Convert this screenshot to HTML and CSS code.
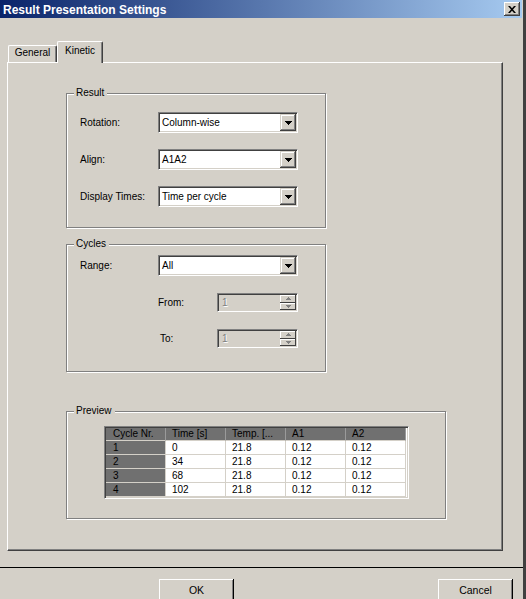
FILE: index.html
```html
<!DOCTYPE html>
<html>
<head>
<meta charset="utf-8">
<title>Result Presentation Settings</title>
<link rel="stylesheet" href="styles.css">
</head>
<body>
<div class="window">
  <div class="titlebar">
    <span class="title">Result Presentation Settings</span>
    <span class="close"><svg width="8" height="7" viewBox="0 0 8 7"><path d="M0 0h2l2 2.2L6 0h2L5 3.5 8 7H6L4 4.8 2 7H0l3-3.5z" fill="#000"/></svg></span>
  </div>
  <div class="tabs">
    <div class="tab">General</div>
    <div class="tab active">Kinetic</div>
  </div>
  <div class="panel">
    <fieldset class="group narrow">
      <legend>Result</legend>
      <div class="form result-form">
        <span class="lbl">Rotation:</span>
        <div class="combo"><span class="value">Column-wise</span><span class="drop"><svg width="7" height="4" viewBox="0 0 7 4"><path d="M0 0h7v1h-1v1h-1v1h-1v1h-1v-1h-1v-1h-1v-1h-1z" fill="#000"/></svg></span></div>
        <span class="lbl">Align:</span>
        <div class="combo"><span class="value">A1A2</span><span class="drop"><svg width="7" height="4" viewBox="0 0 7 4"><path d="M0 0h7v1h-1v1h-1v1h-1v1h-1v-1h-1v-1h-1v-1h-1z" fill="#000"/></svg></span></div>
        <span class="lbl">Display Times:</span>
        <div class="combo"><span class="value">Time per cycle</span><span class="drop"><svg width="7" height="4" viewBox="0 0 7 4"><path d="M0 0h7v1h-1v1h-1v1h-1v1h-1v-1h-1v-1h-1v-1h-1z" fill="#000"/></svg></span></div>
      </div>
    </fieldset>
    <fieldset class="group narrow cycles">
      <legend>Cycles</legend>
      <div class="form cycles-form">
        <span class="lbl">Range:</span>
        <div class="combo wide"><span class="value">All</span><span class="drop"><svg width="7" height="4" viewBox="0 0 7 4"><path d="M0 0h7v1h-1v1h-1v1h-1v1h-1v-1h-1v-1h-1v-1h-1z" fill="#000"/></svg></span></div>
        <span class="lbl sub">From:</span>
        <div class="spin"><span class="value">1</span><span class="arrows"><span class="sbtn"><svg width="5" height="3" viewBox="0 0 5 3"><path d="M2 0h1v1h1v1h1v1h-5v-1h1v-1h1z" fill="#808080"/></svg></span><span class="sbtn"><svg width="5" height="3" viewBox="0 0 5 3"><path d="M0 0h5v1h-1v1h-1v1h-1v-1h-1v-1h-1z" fill="#808080"/></svg></span></span></div>
        <span class="lbl sub to">To:</span>
        <div class="spin"><span class="value">1</span><span class="arrows"><span class="sbtn"><svg width="5" height="3" viewBox="0 0 5 3"><path d="M2 0h1v1h1v1h1v1h-5v-1h1v-1h1z" fill="#808080"/></svg></span><span class="sbtn"><svg width="5" height="3" viewBox="0 0 5 3"><path d="M0 0h5v1h-1v1h-1v1h-1v-1h-1v-1h-1z" fill="#808080"/></svg></span></span></div>
      </div>
    </fieldset>
    <fieldset class="group preview">
      <legend>Preview</legend>
      <div class="form preview-form">
        <div class="grid">
          <table>
            <thead>
              <tr><th class="first">Cycle Nr.</th><th>Time [s]</th><th>Temp. [...</th><th>A1</th><th>A2</th></tr>
            </thead>
            <tbody>
              <tr><td class="first idx">1</td><td>0</td><td>21.8</td><td>0.12</td><td>0.12</td></tr>
              <tr><td class="first idx">2</td><td>34</td><td>21.8</td><td>0.12</td><td>0.12</td></tr>
              <tr><td class="first idx">3</td><td>68</td><td>21.8</td><td>0.12</td><td>0.12</td></tr>
              <tr><td class="first idx">4</td><td>102</td><td>21.8</td><td>0.12</td><td>0.12</td></tr>
            </tbody>
          </table>
        </div>
      </div>
    </fieldset>
  </div>
  <div class="sep"></div>
  <div class="buttons">
    <div class="btn">OK</div>
    <div class="btn">Cancel</div>
  </div>
</div>
</body>
</html>
```
FILE: styles.css
```css
* { box-sizing: border-box; }
html, body { margin: 0; padding: 0; }
body {
  width: 526px;
  height: 599px;
  overflow: hidden;
  background: #404040;
  font-family: "Liberation Sans", Arial, sans-serif;
  font-size: 10px;
  color: #000;
}
.window {
  width: 523px;
  height: 599px;
  background: #d4d0c8;
  overflow: hidden;
}
.titlebar {
  width: 522px;
  height: 18px;
  display: flex;
  align-items: center;
  justify-content: space-between;
  padding: 0 2px 0 3px;
  background: linear-gradient(to right, #0a246a 0%, #a6caf0 100%);
}
.title {
  color: #fff;
  font-weight: bold;
  font-size: 12px;
  line-height: 18px;
  padding-top: 1px;
}
.close {
  width: 16px;
  height: 14px;
  display: flex;
  align-items: center;
  justify-content: center;
  background: #d4d0c8;
  box-shadow: inset -1px -1px #404040, inset 1px 1px #fff, inset -2px -2px #808080;
}
.tabs {
  display: flex;
  align-items: flex-end;
  height: 21px;
  margin-top: 23px;
  padding-left: 8px;
}
.tab {
  width: 49px;
  height: 17px;
  background: #d4d0c8;
  border-top: 1px solid #fff;
  border-left: 1px solid #fff;
  border-right: 1px solid #404040;
  box-shadow: inset -1px 0 #808080;
  border-radius: 2px 2px 0 0;
  text-align: center;
  line-height: 12px;
  padding-top: 1px;
}
.tab.active {
  width: 46px;
  height: 22px;
  margin-bottom: -1px;
  padding-top: 3px;
  position: relative;
  z-index: 1;
}
.panel {
  width: 496px;
  height: 489px;
  margin-left: 7px;
  border-top: 1px solid #fff;
  border-left: 1px solid #fff;
  border-right: 1px solid #404040;
  border-bottom: 1px solid #404040;
  box-shadow: inset -1px -1px #808080;
  padding-left: 58px;
  padding-top: 24px;
}
.group {
  margin: 0;
  padding: 0;
  min-width: 0;
  border: 1px solid #808080;
  box-shadow: 1px 1px 0 #fff, inset 1px 1px 0 #fff;
}
.group.narrow { width: 260px; }
.group.cycles { margin-top: 10px; }
.group.preview { width: 380px; margin-top: 33px; }
legend {
  margin-left: 7px;
  padding: 0 3px 0 2px;
  line-height: 12px;
  background: #d4d0c8;
}
.form { display: grid; align-items: center; }
.result-form {
  grid-template-columns: 78px 140px;
  grid-auto-rows: 21px;
  row-gap: 16px;
  padding: 13px 0 20px 13px;
}
.cycles-form {
  grid-template-columns: 78px 59px 81px;
  grid-template-rows: 21px 19px 19px;
  row-gap: 17px;
  padding: 5px 0 23px 13px;
}
.cycles-form .wide { grid-column: 2 / 4; }
.cycles-form .sub { grid-column: 2; }
.cycles-form .to { padding-left: 2px; }
.preview-form {
  display: block;
  padding: 9px 0 19px 37px;
}
.lbl { white-space: nowrap; }
.combo {
  width: 140px;
  height: 21px;
  display: flex;
  justify-content: space-between;
  background: #fff;
  border: 1px solid;
  border-color: #808080 #fff #fff #808080;
  box-shadow: inset 1px 1px #404040, inset -1px -1px #d4d0c8;
  padding: 1px;
}
.combo .value {
  padding-left: 2px;
  line-height: 17px;
}
.drop {
  width: 16px;
  height: 17px;
  display: flex;
  align-items: center;
  justify-content: center;
  background: #d4d0c8;
  box-shadow: inset -1px -1px #404040, inset 1px 1px #d4d0c8, inset -2px -2px #808080, inset 2px 2px #fff;
}
.spin {
  width: 81px;
  height: 19px;
  display: flex;
  justify-content: space-between;
  background: #d4d0c8;
  border: 1px solid;
  border-color: #808080 #fff #fff #808080;
  box-shadow: inset 1px 1px #404040, inset -1px -1px #d4d0c8;
  padding: 1px;
}
.spin .value {
  color: #808080;
  text-shadow: 1px 1px 0 #fff;
  padding-left: 3px;
  line-height: 15px;
}
.arrows {
  width: 16px;
  display: flex;
  flex-direction: column;
}
.sbtn {
  flex: 1;
  display: flex;
  align-items: center;
  justify-content: center;
  background: #d4d0c8;
  box-shadow: inset -1px -1px #404040, inset 1px 1px #fff;
}
.grid {
  width: 305px;
  height: 73px;
  background: #fff;
  border: 1px solid;
  border-color: #808080 #fff #fff #808080;
  box-shadow: inset 1px 1px #404040, inset -1px -1px #d4d0c8;
  padding: 1px;
}
table {
  border-collapse: separate;
  border-spacing: 0;
  table-layout: fixed;
  width: 300px;
}
th, td {
  width: 60px;
  padding: 0 0 0 6px;
  border-right: 1px solid #d4d0c8;
  border-bottom: 1px solid #d4d0c8;
  line-height: 13px;
  text-align: left;
  font-weight: normal;
  white-space: nowrap;
  overflow: hidden;
}
th {
  background: #707070;
  line-height: 12px;
  border-right-color: #9a9a9a;
}
th.first, td.first { padding-left: 7px; }
td.idx { background: #707070; }
.sep {
  width: 523px;
  height: 1px;
  margin-top: 16px;
  background: #000;
}
.buttons {
  display: flex;
  justify-content: space-between;
  padding: 0 10px 0 159px;
  margin-top: 11px;
}
.btn {
  width: 75px;
  height: 23px;
  text-align: center;
  line-height: 23px;
  font-size: 10.5px;
  background: #d4d0c8;
  box-shadow: inset -1px -1px #000, inset 1px 1px #fff, inset -2px -2px #808080;
}
```
